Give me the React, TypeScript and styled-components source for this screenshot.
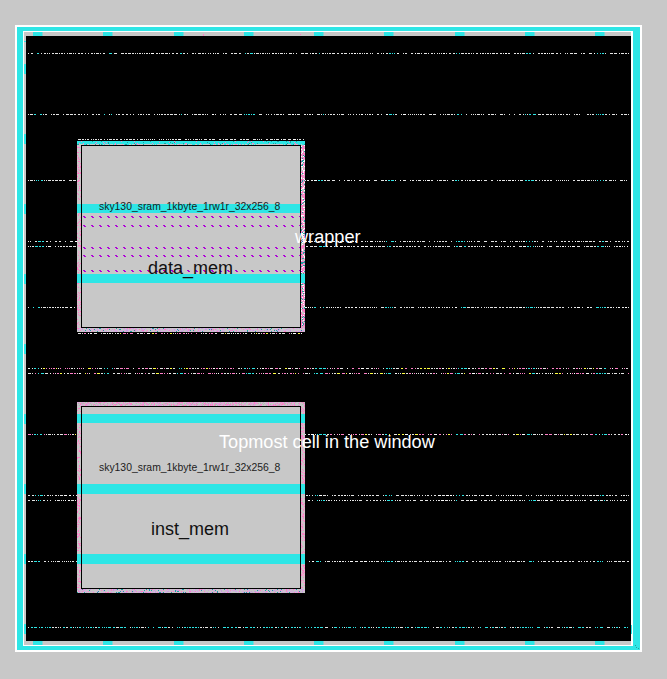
import React from "react";
import styled, { createGlobalStyle } from "styled-components";

const CYAN = "#2ee6e6";
const GRAY = "#c8c8c8";

const Global = createGlobalStyle`
  html, body { margin: 0; padding: 0; background: ${GRAY}; }
  #root { width: 667px; height: 679px; overflow: hidden; }
`;

const Canvas = styled.div`
  position: relative;
  width: 667px;
  height: 679px;
  padding: 25px 0 0 15px;
  box-sizing: border-box;
  background: ${GRAY};
  font-family: "Liberation Sans", Arial, sans-serif;
`;
const OuterFrame = styled.div`
  width: 627px;
  height: 627px;
  box-sizing: border-box;
  border: 2px solid #fff;
  background: ${CYAN};
  padding: 4px 7px 4px 6px;
`;
const InnerFrame = styled.div`
  height: 100%;
  box-sizing: border-box;
  border-style: solid;
  border-color: #fff;
  border-width: 1px 2px 1px 1px;
  background: ${GRAY};
  padding: 4px 0 4px 2px;
`;
const Core = styled.div`
  height: 100%;
  background: #000;
`;
const Art = styled.svg`
  position: absolute;
  left: 0;
  top: 0;
`;
const Macro = styled.div<{ $left: number; $top: number; $height: number }>`
  position: absolute;
  left: ${(p) => p.$left}px;
  top: ${(p) => p.$top}px;
  width: 228px;
  height: ${(p) => p.$height}px;
  box-sizing: border-box;
  padding: 4px;
  background: ${GRAY};
`;
const Edge = styled.svg`
  position: absolute;
  left: 0;
  top: 0;
`;
const Outline = styled.div`
  position: relative;
  height: 100%;
  display: flex;
  flex-direction: column;
  &::after {
    content: "";
    position: absolute;
    inset: 0;
    border: 1px solid #000;
  }
`;
const Bar = styled.div<{ $mt: number; $h: number; $short?: boolean }>`
  flex: none;
  margin: ${(p) => p.$mt}px ${(p) => (p.$short ? 0 : -4)}px 0 -4px;
  height: ${(p) => p.$h}px;
  background: ${CYAN};
  position: relative;
`;
const DashRow = styled.div<{ $mt: number; $long?: boolean }>`
  flex: none;
  height: 2px;
  margin: ${(p) => p.$mt}px ${(p) => (p.$long ? -4 : 1)}px 0 2px;
  position: relative;
  background:
    linear-gradient(90deg, #b000d8 0 2px, transparent 2px) 0 0 / 8px 1px repeat-x,
    linear-gradient(90deg, #b000d8 0 2px, transparent 2px) 1px 1px / 8px 1px repeat-x;
`;
const CellName = styled.span<{ $top: number }>`
  position: absolute;
  left: 99px;
  top: ${(p) => p.$top}px;
  font-size: 10.4px;
  line-height: 12px;
  color: #1c1c1c;
  white-space: nowrap;
`;
const InstName = styled.span<{ $top: number; $left: number }>`
  position: absolute;
  left: ${(p) => p.$left}px;
  top: ${(p) => p.$top}px;
  font-size: 18px;
  line-height: 20px;
  color: #111;
  white-space: nowrap;
`;
const Overlay = styled.span<{ $top: number; $left: number }>`
  position: absolute;
  left: ${(p) => p.$left}px;
  top: ${(p) => p.$top}px;
  font-size: 18.15px;
  line-height: 20px;
  color: #fff;
  white-space: nowrap;
`;

function rng(seed: number) {
  let s = seed;
  return () => {
    s = (s * 1664525 + 1013904223) >>> 0;
    return ((s >>> 8) & 0xffff) / 0xffff;
  };
}

type Rect = { x: number; y: number; w: number; h?: number; c: string };

const inTab = (x: number) => {
  const m = (x - 33 + 7025) % 70.25;
  return m < 10;
};

function dotted(y: number, x0: number, x1: number, seed: number, pal: string[], tabCyan = true): Rect[] {
  const r = rng(seed);
  const out: Rect[] = [];
  let x = x0;
  while (x < x1) {
    const w = r() < 0.5 ? 1 : r() < 0.6 ? 2 : 3;
    let c = pal[Math.floor(r() * pal.length)];
    if (tabCyan && inTab(x) && r() < 0.75) c = CYAN;
    out.push({ x, y, w: Math.min(w, x1 - x), c });
    x += w + (r() < 0.62 ? 1 : r() < 0.7 ? 2 : 4);
  }
  return out;
}

const W = "#e4e4e4";
const LIGHT = [W, W, W, W, W, W, W, W, W, "#ffffff"];
const CY = [W, CYAN, CYAN, CYAN, W];
const MIX = [W, W, W, "#ff80c8", "#ff80c8", W, "#ffffff", "#ff80c8", "#ffff40"];

const rows: [number, string[]][] = [
  [53, LIGHT], [114, LIGHT], [180, LIGHT], [241, LIGHT], [246, LIGHT],
  [307, LIGHT], [368, MIX], [373, MIX], [434, MIX], [495, LIGHT], [500, LIGHT],
  [561, LIGHT], [627, CY],
];

const art: Rect[] = [];
rows.forEach(([y, pal], i) => art.push(...dotted(y, 28, 629, 17 + i * 31, pal)));
art.push(...dotted(139, 78, 304, 901, LIGHT, false));
art.push(...dotted(333, 78, 304, 902, MIX, false));

for (let i = 0; i < 9; i++) {
  const x = Math.round(33 + i * 70.25);
  art.push({ x, y: 32, w: 9.5, h: 4, c: CYAN });
  art.push({ x, y: 641, w: 9.5, h: 4, c: CYAN });
}
for (let i = 0; i < 9; i++) {
  const y = Math.round(63.5 + i * 70);
  art.push({ x: 24, y, w: 2, h: 10, c: CYAN });
}
art.push({ x: 24, y: 41, w: 2, h: 1, c: CYAN });
art.push({ x: 203, y: 34, w: 1, h: 2, c: "#ff80c8" });
art.push({ x: 300, y: 34, w: 1, h: 1, c: "#ff80c8" });

const PINK = ["#ff80c8", "#ff80c8", "#f7a0d0"];

function edge(
  w: number,
  h: number,
  seed: number,
  o: { top: string[]; topP: number; bottom: string[]; left: string[]; leftP: number; right: string[]; rightP: number },
) {
  const r = rng(seed);
  const out: Rect[] = [];
  const scatter = (x0: number, y0: number, x1: number, y1: number, pal: string[], p: number) => {
    for (let y = y0; y < y1; y++)
      for (let x = x0; x < x1; x++)
        if (r() < p) out.push({ x, y, w: 1, c: pal[Math.floor(r() * pal.length)] });
  };
  scatter(0, 0, w, 4, o.top, o.topP);
  scatter(0, h - 4, w, h, o.bottom, 0.5);
  scatter(0, 4, 4, h - 4, o.left, o.leftP);
  scatter(w - 4, 4, w, h - 4, o.right, o.rightP);
  return out;
}

const BOTTOM = ["#d8a8e0", "#c8a0e0", "#d8b8e0", "#d0a8e8", "#d8a8e0", "#ff80c8", "#20a0a0"];
const TOPINST = ["#ff80c8", "#e0a0d8", "#e0a0d8", "#b8b8b8"];

const dataEdge: Rect[] = [
  { x: 0, y: 0, w: 228, h: 3, c: CYAN },
  ...edge(228, 191, 5, {
    top: [CYAN, CYAN, CYAN, CYAN, "#ff80c8", "#20a0a0"],
    topP: 0.35,
    bottom: BOTTOM,
    left: PINK,
    leftP: 0.28,
    right: ["#ff80c8", "#ff80c8", "#ff80c8", "#20a0a0", "#ffffff"],
    rightP: 0.75,
  }),
];
const instEdge = edge(228, 191, 9, {
  top: TOPINST,
  topP: 0.6,
  bottom: BOTTOM,
  left: PINK,
  leftP: 0.28,
  right: PINK,
  rightP: 0.35,
});

function Rects({ items }: { items: Rect[] }) {
  return (
    <>
      {items.map((r, i) => (
        <rect key={i} x={r.x} y={r.y} width={r.w} height={r.h ?? 1} fill={r.c} />
      ))}
    </>
  );
}

export default function App() {
  return (
    <Canvas>
      <Global />
      <OuterFrame>
        <InnerFrame>
          <Core />
        </InnerFrame>
      </OuterFrame>
      <Art width={667} height={679} aria-hidden>
        <Rects items={art} />
        <rect x={631} y={625} width={1} height={9} fill={CYAN} />
        <rect x={635} y={645} width={1} height={1} fill="#20a0a0" />
        <rect x={636} y={647} width={1} height={1} fill="#20a0a0" />
        <rect x={638} y={648} width={1} height={1} fill="#20a0a0" />
      </Art>

      <Macro $left={77} $top={141} $height={191}>
        <Edge width={228} height={191} aria-hidden>
          <Rects items={dataEdge} />
        </Edge>
        <Outline>
          <Bar $mt={59} $h={9} $short />
          <DashRow $mt={3} />
          <DashRow $mt={7} />
          <DashRow $mt={20} />
          <DashRow $mt={6} />
          <DashRow $mt={13} $long />
          <Bar $mt={2} $h={9} />
        </Outline>
      </Macro>

      <Macro $left={77} $top={402} $height={191}>
        <Edge width={228} height={191} aria-hidden>
          <Rects items={instEdge} />
        </Edge>
        <Outline>
          <Bar $mt={8} $h={9} />
          <Bar $mt={61} $h={10} />
          <Bar $mt={60} $h={10} />
        </Outline>
      </Macro>

      <CellName $top={201}>sky130_sram_1kbyte_1rw1r_32x256_8</CellName>
      <InstName $left={148} $top={258}>data_mem</InstName>
      <Overlay $left={295} $top={227}>wrapper</Overlay>

      <Overlay $left={219} $top={432}>Topmost cell in the window</Overlay>
      <CellName $top={462}>sky130_sram_1kbyte_1rw1r_32x256_8</CellName>
      <InstName $left={151} $top={519}>inst_mem</InstName>
    </Canvas>
  );
}
